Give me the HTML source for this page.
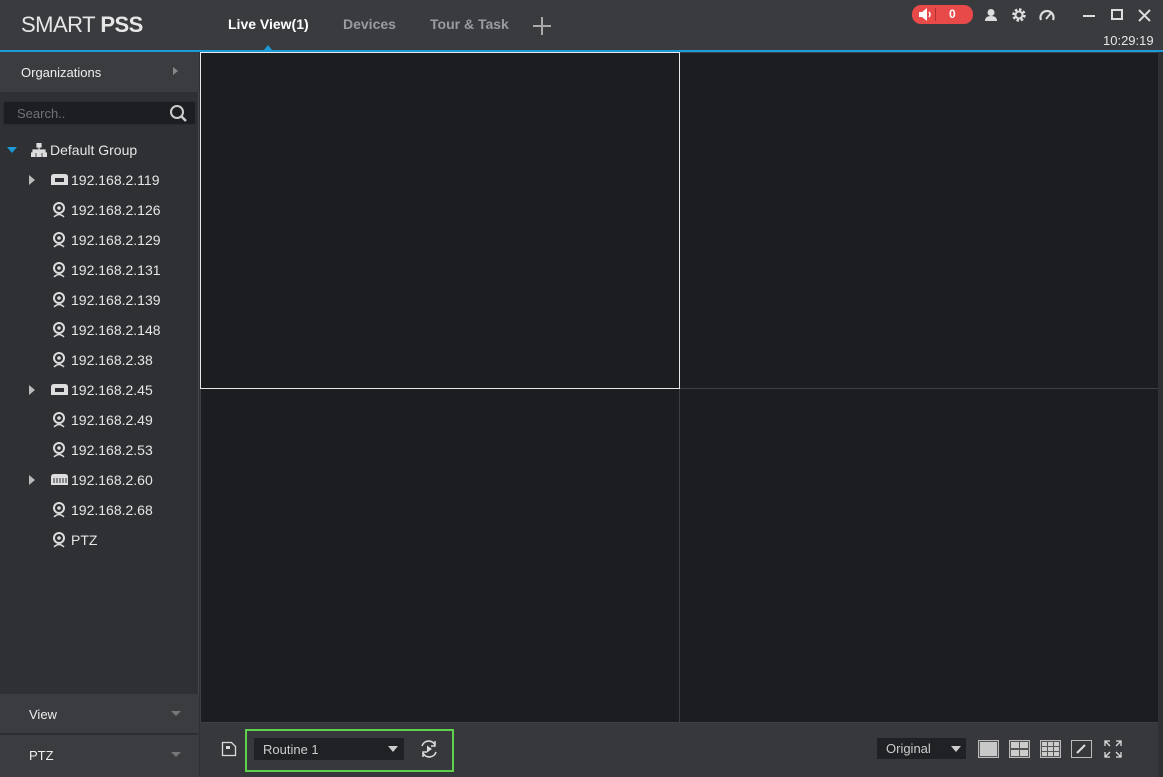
<!DOCTYPE html>
<html><head><style>
*{margin:0;padding:0;box-sizing:border-box}
body{width:1163px;height:777px;background:#2e3034;font-family:"Liberation Sans",Arial,sans-serif;position:relative;overflow:hidden;color:#e8e8e8}
.a{position:absolute}
.hdr{left:0;top:0;width:1163px;height:50px;background:#393b3f}
.line{left:0;top:50px;width:1163px;height:2px;background:#1d9bd8}
.tab{top:16px;font-size:14px;font-weight:bold;color:#9a9b9e}
.side{left:0;top:52px;width:199px;height:725px;background:#2e3034;border-right:1px solid #45474b}
.node{left:0;height:30px;font-size:14px;color:#e6e6e6;line-height:30px}
.vid{background:#1b1d21}
.cell{border:1px solid #3c3f44}
</style></head><body>
<div class="a hdr"></div>
<div class="a" style="left:21px;top:12px;font-size:22px;color:#e6e6e6;letter-spacing:-0.5px">SMART <b>PSS</b></div>
<div class="a tab" style="left:228px;color:#fff">Live View(1)</div>
<div class="a tab" style="left:343px">Devices</div>
<div class="a tab" style="left:430px">Tour &amp; Task</div>
<div class="a" style="left:533px;top:25px;width:18px;height:2px;background:#aaa"></div>
<div class="a" style="left:541px;top:17px;width:2px;height:18px;background:#aaa"></div>
<div class="a" style="left:264px;top:45px;width:0;height:0;border-left:4px solid transparent;border-right:4px solid transparent;border-bottom:5px solid #1d9bd8"></div>
<!-- right header -->
<div class="a" style="left:912px;top:5px;width:61px;height:19px;background:#e84a4a;border-radius:9px"></div>
<div class="a" style="left:935px;top:8px;width:1px;height:13px;background:#b53030"></div>
<svg class="a" style="left:918px;top:8px" width="14" height="13"><path d="M1 4h3l5-4v13l-5-4H1z" fill="#fff"/><path d="M11 4q2 2.5 0 5" stroke="#fff" fill="none" stroke-width="1.5"/></svg>
<div class="a" style="left:949px;top:7px;font-size:12px;font-weight:bold;color:#fff">0</div>
<svg class="a" style="left:984px;top:8px" width="14" height="14"><circle cx="7" cy="4.5" r="3.5" fill="#ddd"/><path d="M1 13q0-5 6-5t6 5z" fill="#ddd"/></svg>
<svg class="a" style="left:1011px;top:7px" width="16" height="16"><circle cx="8" cy="8" r="5" fill="none" stroke="#ddd" stroke-width="3.5" stroke-dasharray="2.3 1.6"/><circle cx="8" cy="8" r="3.5" fill="none" stroke="#ddd" stroke-width="2"/></svg>
<svg class="a" style="left:1039px;top:8px" width="16" height="13"><path d="M2 12A6.5 6.5 0 1 1 14 12" stroke="#ddd" stroke-width="2.2" fill="none"/><path d="M7 11l5-6" stroke="#ddd" stroke-width="2"/></svg>
<div class="a" style="left:1083px;top:15px;width:12px;height:2px;background:#ddd"></div>
<div class="a" style="left:1111px;top:9px;width:12px;height:11px;border:2px solid #ddd"></div>
<svg class="a" style="left:1138px;top:9px" width="13" height="13"><path d="M1 1l11 11M12 1L1 12" stroke="#ddd" stroke-width="2"/></svg>
<div class="a" style="left:1103px;top:33px;font-size:13px;color:#e6e6e6">10:29:19</div>
<div class="a line"></div>
<!-- sidebar -->
<div class="a side"></div>
<div class="a" style="left:0;top:52px;width:199px;height:40px;background:#3a3c40"></div>
<div class="a" style="left:21px;top:65px;font-size:13px;color:#eee">Organizations</div>
<div class="a" style="left:173px;top:67px;border-top:4px solid transparent;border-bottom:4px solid transparent;border-left:5px solid #888"></div>
<div class="a" style="left:3px;top:101px;width:193px;height:24px;background:#1c1e22;border:1px solid #2a2c30"></div>
<div class="a" style="left:17px;top:106px;font-size:13px;color:#6f7276">Search..</div>
<svg class="a" style="left:169px;top:104px" width="18" height="18"><circle cx="8" cy="8" r="6" stroke="#ccc" stroke-width="2" fill="none"/><path d="M12 12l5 5" stroke="#ccc" stroke-width="2.5"/></svg>
<div class="a" style="left:7px;top:147px;border-left:5px solid transparent;border-right:5px solid transparent;border-top:6px solid #1d9bd8"></div>
<svg class="a" style="left:31px;top:143px" width="16" height="14"><path d="M6 0h4v4H6zM0 10h4v4H0zM6 10h4v4H6zM12 10h4v4h-4zM8 4v3M2 10V7h12v3" stroke="#ddd" fill="#ddd" stroke-width="1.2"/></svg>
<div class="a node" style="left:50px;top:135px">Default Group</div>
<div id="tree"></div>
<div class="a" style="left:0;top:694px;width:199px;height:40px;background:#3a3c40;border-bottom:1px solid #2a2c30"></div>
<div class="a" style="left:29px;top:707px;font-size:13px;color:#eee">View</div>
<div class="a" style="left:171px;top:711px;border-left:5px solid transparent;border-right:5px solid transparent;border-top:5px solid #777"></div>
<div class="a" style="left:0;top:735px;width:199px;height:42px;background:#3a3c40"></div>
<div class="a" style="left:29px;top:748px;font-size:13px;color:#eee">PTZ</div>
<div class="a" style="left:171px;top:752px;border-left:5px solid transparent;border-right:5px solid transparent;border-top:5px solid #777"></div>
<!-- video -->
<div class="a vid" style="left:200px;top:52px;width:958px;height:670px"></div>
<div class="a cell" style="left:679px;top:52px;width:480px;height:337px"></div>
<div class="a cell" style="left:200px;top:388px;width:480px;height:335px"></div>
<div class="a cell" style="left:679px;top:388px;width:480px;height:335px"></div>
<div class="a" style="left:200px;top:52px;width:480px;height:337px;border:1px solid #e8e8e8"></div>
<div class="a" style="left:1158px;top:52px;width:5px;height:725px;background:#2e3034"></div>
<!-- bottom bar -->
<div class="a" style="left:200px;top:723px;width:958px;height:54px;background:#36383c"></div>
<svg class="a" style="left:221px;top:741px" width="16" height="16"><path d="M1.5 1.5h9l4 4v9h-13z" stroke="#ddd" stroke-width="1.3" fill="none"/><rect x="5" y="5" width="4" height="3" fill="#ddd"/></svg>
<div class="a" style="left:245px;top:729px;width:209px;height:43px;border:2px solid #5fd14a"></div>
<div class="a" style="left:254px;top:738px;width:150px;height:22px;background:#1f2125"></div>
<div class="a" style="left:263px;top:742px;font-size:13px;color:#ccc">Routine 1</div>
<div class="a" style="left:388px;top:746px;border-left:5px solid transparent;border-right:5px solid transparent;border-top:6px solid #ccc"></div>
<svg class="a" style="left:419px;top:740px" width="20" height="18"><path d="M3 6A7 7 0 0 1 16 5M17 12A7 7 0 0 1 4 13" stroke="#ddd" stroke-width="1.6" fill="none"/><path d="M16 1v5h-4M4 17v-5h4" stroke="#ddd" stroke-width="1.5" fill="none"/><path d="M8 5.5v7l5-3.5z" fill="#ddd"/></svg>
<div class="a" style="left:877px;top:738px;width:89px;height:21px;background:#1f2125"></div>
<div class="a" style="left:886px;top:741px;font-size:13px;color:#ccc">Original</div>
<div class="a" style="left:951px;top:746px;border-left:5px solid transparent;border-right:5px solid transparent;border-top:6px solid #ccc"></div>
<div class="a" style="left:978px;top:740px;width:21px;height:18px;border:1px solid #bbb;background:#c8c8c8;box-shadow:inset 0 0 0 1px #555"></div>
<svg class="a" style="left:1009px;top:740px" width="21" height="18"><rect x=".5" y=".5" width="20" height="17" fill="#555" stroke="#bbb"/><rect x="2" y="2" width="8" height="6" fill="#ccc"/><rect x="11" y="2" width="8" height="6" fill="#ccc"/><rect x="2" y="10" width="8" height="6" fill="#ccc"/><rect x="11" y="10" width="8" height="6" fill="#ccc"/></svg>
<svg class="a" style="left:1040px;top:740px" width="21" height="18"><rect x=".5" y=".5" width="20" height="17" fill="#555" stroke="#bbb"/><g fill="#ccc"><rect x="2" y="2" width="5" height="4"/><rect x="8" y="2" width="5" height="4"/><rect x="14" y="2" width="5" height="4"/><rect x="2" y="7" width="5" height="4"/><rect x="8" y="7" width="5" height="4"/><rect x="14" y="7" width="5" height="4"/><rect x="2" y="12" width="5" height="4"/><rect x="8" y="12" width="5" height="4"/><rect x="14" y="12" width="5" height="4"/></g></svg>
<svg class="a" style="left:1071px;top:740px" width="21" height="18"><rect x=".5" y=".5" width="20" height="17" fill="none" stroke="#bbb"/><path d="M6 13l8-8" stroke="#ddd" stroke-width="2"/></svg>
<svg class="a" style="left:1104px;top:740px" width="18" height="18"><g stroke="#ddd" stroke-width="1.3" fill="none"><path d="M1 6V1h5M1 1l5 5M17 6V1h-5M17 1l-5 5M1 12v5h5M1 17l5-5M17 12v5h-5M17 17l-5-5"/></g></svg>
<script>
var items=[["192.168.2.119",1],["192.168.2.126",0],["192.168.2.129",0],["192.168.2.131",0],["192.168.2.139",0],["192.168.2.148",0],["192.168.2.38",0],["192.168.2.45",1],["192.168.2.49",0],["192.168.2.53",0],["192.168.2.60",2],["192.168.2.68",0],["PTZ",0]];
var h="";items.forEach(function(it,i){var y=165+i*30;
if(it[1]){h+='<div class="a" style="left:29px;top:'+(y+10)+'px;border-top:5px solid transparent;border-bottom:5px solid transparent;border-left:6px solid #bbb"></div>';
h+='<svg class="a" style="left:51px;top:'+(y+9)+'px" width="17" height="11"><path d="M0 3q0-3 3-3h11q3 0 3 3v8H0z" fill="#ddd"/>'+(it[1]==1?'<rect x="4" y="4" width="9" height="4" fill="#2e3034"/>':'<path d="M3 4v5M6 4v5M9 4v5M12 4v5M15 4v5" stroke="#2e3034"/>')+'</svg>';}
else{h+='<svg class="a" style="left:52px;top:'+(y+7)+'px" width="14" height="16"><circle cx="7" cy="6" r="5" stroke="#ddd" stroke-width="2" fill="none"/><circle cx="7" cy="6" r="1.8" fill="#ddd"/><path d="M2 15q5-5 10 0" stroke="#ddd" stroke-width="1.5" fill="none"/></svg>';}
h+='<div class="a node" style="left:71px;top:'+y+'px">'+it[0]+'</div>';});
document.getElementById("tree").innerHTML=h;
</script>
</body></html>
